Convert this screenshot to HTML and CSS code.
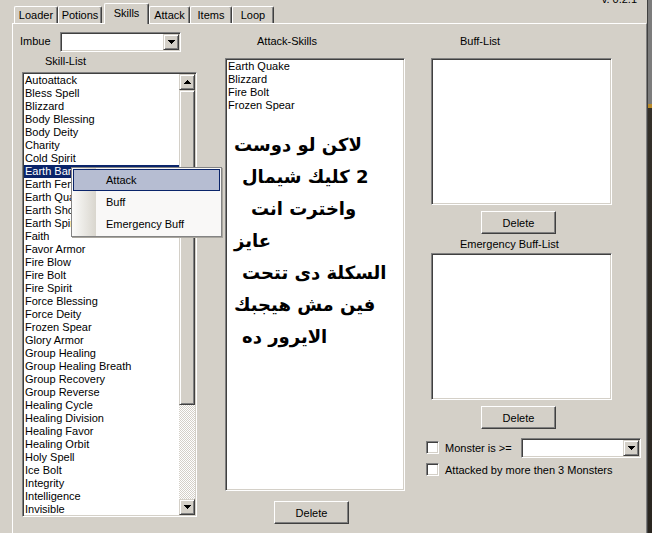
FILE: index.html
```html
<!DOCTYPE html>
<html>
<head>
<meta charset="utf-8">
<title>Skills</title>
<link rel="stylesheet" href="styles.css">
</head>
<body>
<div class="window">
  <div class="main">
    <div class="version"><span>v. 0.2.1</span></div>
    <div class="tabs">
      <div class="tab t-loader">Loader</div>
      <div class="tab t-potions">Potions</div>
      <div class="tab active t-skills">Skills</div>
      <div class="tab t-attack">Attack</div>
      <div class="tab t-items">Items</div>
      <div class="tab t-loop">Loop</div>
    </div>
    <div class="panel">
      <div class="col col-left">
        <div class="imbue-row">
          <span class="imbue-lbl">Imbue</span>
          <div class="combo imbue-combo">
            <div class="combo-field"></div>
            <div class="raised combo-btn"><svg width="7" height="4" viewBox="0 0 7 4"><path d="M0 0h7v1H6v1H5v1H4v1H3V3H2V2H1V1H0z"/></svg></div>
          </div>
        </div>
        <div class="caption skill-cap">Skill-List</div>
        <div class="sunken skill-list">
          <div class="items">
            <div class="item">Autoattack</div>
            <div class="item">Bless Spell</div>
            <div class="item">Blizzard</div>
            <div class="item">Body Blessing</div>
            <div class="item">Body Deity</div>
            <div class="item">Charity</div>
            <div class="item">Cold Spirit</div>
            <div class="item sel">Earth Barrier</div>
            <div class="item">Earth Fence</div>
            <div class="item">Earth Quake</div>
            <div class="item">Earth Shock</div>
            <div class="item">Earth Spirit</div>
            <div class="item">Faith</div>
            <div class="item">Favor Armor</div>
            <div class="item">Fire Blow</div>
            <div class="item">Fire Bolt</div>
            <div class="item">Fire Spirit</div>
            <div class="item">Force Blessing</div>
            <div class="item">Force Deity</div>
            <div class="item">Frozen Spear</div>
            <div class="item">Glory Armor</div>
            <div class="item">Group Healing</div>
            <div class="item">Group Healing Breath</div>
            <div class="item">Group Recovery</div>
            <div class="item">Group Reverse</div>
            <div class="item">Healing Cycle</div>
            <div class="item">Healing Division</div>
            <div class="item">Healing Favor</div>
            <div class="item">Healing Orbit</div>
            <div class="item">Holy Spell</div>
            <div class="item">Ice Bolt</div>
            <div class="item">Integrity</div>
            <div class="item">Intelligence</div>
            <div class="item">Invisible</div>
          </div>
          <div class="vscroll">
            <div class="raised sbtn"><svg width="7" height="4" viewBox="0 0 7 4"><path d="M3 0h1v1h1v1h1v1h1v1H0V3h1V2h1V1h1z"/></svg></div>
            <div class="raised thumb"></div>
            <div class="track"></div>
            <div class="raised sbtn"><svg width="7" height="4" viewBox="0 0 7 4"><path d="M0 0h7v1H6v1H5v1H4v1H3V3H2V2H1V1H0z"/></svg></div>
          </div>
          <div class="ctx">
            <div class="ctx-item hot">Attack</div>
            <div class="ctx-item">Buff</div>
            <div class="ctx-item">Emergency Buff</div>
          </div>
        </div>
      </div>

      <div class="col col-mid">
        <div class="caption mid-cap">Attack-Skills</div>
        <div class="sunken attack-list">
          <div class="item">Earth Quake</div>
          <div class="item">Blizzard</div>
          <div class="item">Fire Bolt</div>
          <div class="item">Frozen Spear</div>
          <div class="note">
            <div class="ar ar1" dir="rtl">لاكن لو دوست</div>
            <div class="ar ar2" dir="rtl">2 كليك شيمال</div>
            <div class="ar ar3" dir="rtl">واخترت انت</div>
            <div class="ar ar4" dir="rtl">عايز</div>
            <div class="ar ar5" dir="rtl">السكلة دى تتحت</div>
            <div class="ar ar6" dir="rtl">فين مش هيجبك</div>
            <div class="ar ar7" dir="rtl">الايرور ده</div>
          </div>
        </div>
        <div class="raised button mid-del">Delete</div>
      </div>

      <div class="col col-right">
        <div class="caption right-cap">Buff-List</div>
        <div class="sunken buff-list"></div>
        <div class="raised button right-del">Delete</div>
        <div class="caption emerg-cap">Emergency Buff-List</div>
        <div class="sunken emerg-list"></div>
        <div class="raised button right-del">Delete</div>
        <div class="check-row row1">
          <div class="sunken checkbox"></div>
          <span class="check-lbl">Monster is &gt;=</span>
          <div class="combo monster-combo">
            <div class="combo-field"></div>
            <div class="raised combo-btn"><svg width="7" height="4" viewBox="0 0 7 4"><path d="M0 0h7v1H6v1H5v1H4v1H3V3H2V2H1V1H0z"/></svg></div>
          </div>
        </div>
        <div class="check-row row2">
          <div class="sunken checkbox"></div>
          <span class="check-lbl">Attacked by more then 3 Monsters</span>
        </div>
      </div>
    </div>
  </div>
  <div class="edge"></div>
</div>
</body>
</html>
```

FILE: styles.css
```css
* { box-sizing: border-box; }

body {
  margin: 0;
  width: 652px;
  height: 533px;
  overflow: hidden;
  background: #d4d0c8;
  font-family: "Liberation Sans", Arial, sans-serif;
  font-size: 11px;
  color: #000;
}

.window {
  display: flex;
  height: 533px;
}

.main {
  width: 647px;
  flex: none;
  display: flex;
  flex-direction: column;
}

.edge {
  flex: 1;
  background:
    linear-gradient(#404040, #404040) 0 0 / 1px 100% no-repeat,
    linear-gradient(to bottom, #7c7c7c 0, #7c7c7c 104px, #b98a2a 104px, #b98a2a 108px, #34302a 108px, #2a2620 100%);
}

/* version text (clipped at top) */
.version {
  height: 3px;
  overflow: hidden;
  display: flex;
  justify-content: flex-end;
  align-items: flex-end;
  padding-right: 10px;
}
.version span {
  line-height: 12px;
  margin-bottom: -2px;
}

/* tabs */
.tabs {
  height: 21px;
  margin-bottom: -1px;
  position: relative;
  z-index: 1;
  display: flex;
  align-items: flex-start;
  padding-left: 14px;
}
.tab {
  margin-top: 3px;
  height: 17px;
  border-left: 1px solid #fff;
  border-top: 1px solid #fff;
  border-right: 1px solid #404040;
  box-shadow: inset -1px 0 0 #808080;
  border-radius: 2px 2px 0 0;
  background: #d4d0c8;
  text-align: center;
  line-height: 16px;
}
.tab.active {
  margin-top: 0;
  height: 21px;
  line-height: 18px;
}
.t-loader { width: 44px; }
.t-potions { width: 44px; margin-right: 2px; }
.t-skills { width: 45px; }
.t-attack { width: 41px; }
.t-items { width: 42px; }
.t-loop { width: 42px; }

/* panel */
.panel {
  flex: 1;
  margin-left: 12px;
  border-left: 1px solid #fff;
  border-top: 1px solid #fff;
  border-right: 1px solid #808080;
  display: flex;
  align-items: flex-start;
}

.col {
  display: flex;
  flex-direction: column;
  flex: none;
}
.col-left { margin-left: 7px; width: 178px; }
.col-mid { margin-left: 27px; width: 180px; }
.col-right { margin-left: 21px; width: 215px; }

.caption {
  line-height: 13px;
  height: 13px;
  white-space: nowrap;
}

/* 3D styles */
.sunken {
  background: #fff;
  border: 1px solid;
  border-color: #808080 #fff #fff #808080;
  box-shadow: inset 1px 1px 0 #404040, inset -1px -1px 0 #d4d0c8;
  padding: 1px;
}
.raised {
  background: #d4d0c8;
  border: 1px solid;
  border-color: #d4d0c8 #404040 #404040 #d4d0c8;
  box-shadow: inset 1px 1px 0 #fff, inset -1px -1px 0 #808080;
}

/* imbue */
.imbue-row {
  margin-top: 8px;
  height: 20px;
  display: flex;
  align-items: center;
}
.imbue-lbl {
  width: 40px;
  margin-top: -2px;
}
.combo {
  height: 20px;
  display: flex;
  background: #fff;
  border: 1px solid;
  border-color: #808080 #fff #fff #808080;
  box-shadow: inset 1px 1px 0 #404040, inset -1px -1px 0 #d4d0c8;
  padding: 1px;
}
.combo-field { flex: 1; }
.combo-btn {
  width: 16px;
  height: 16px;
  display: flex;
  align-items: center;
  justify-content: center;
}
.combo-btn svg, .sbtn svg { display: block; }
.imbue-combo { width: 121px; }

.skill-cap {
  margin-top: 3px;
  padding-left: 25px;
}

/* skill list */
.skill-list {
  margin-top: 4px;
  margin-left: 2px;
  width: 175px;
  height: 445px;
  display: flex;
  position: relative;
}
.items {
  flex: 1;
  overflow: hidden;
}
.item {
  height: 13px;
  line-height: 13px;
  padding-left: 1px;
  white-space: nowrap;
}
.item.sel {
  background: #0a246a;
  color: #fff;
}
.vscroll {
  width: 16px;
  display: flex;
  flex-direction: column;
}
.sbtn {
  height: 16px;
  display: flex;
  align-items: center;
  justify-content: center;
}
.thumb { height: 315px; }
.track {
  flex: 1;
  background: repeating-conic-gradient(#fff 0 25%, #d4d0c8 0 50%) 0 0 / 2px 2px;
}

/* context menu */
.ctx {
  position: absolute;
  left: 48px;
  top: 94px;
  width: 151px;
  border: 1px solid #848484;
  padding: 1px;
  background:
    linear-gradient(to right, #fbfbfa, #d9d6ce) 0 0 / 24px 100% no-repeat,
    #f9f8f7;
  box-shadow: 1px 1px 0 #a9a69e;
}
.ctx-item {
  height: 22px;
  line-height: 20px;
  border: 1px solid transparent;
  padding-left: 32px;
  white-space: nowrap;
}
.ctx-item.hot {
  background: #b6bdd2;
  border-color: #0a246a;
}

/* attack skills */
.mid-cap {
  margin-top: 11px;
  padding-left: 32px;
}
.attack-list {
  margin-top: 10px;
  width: 180px;
  height: 433px;
  overflow: hidden;
}
.note {
  margin-top: 17px;
}
.ar {
  font-family: "DejaVu Sans", sans-serif;
  font-weight: bold;
  font-size: 18px;
  line-height: 32px;
  height: 32px;
  text-align: left;
  white-space: nowrap;
}
.ar1 { padding-left: 7px; }
.ar2 { padding-left: 15px; }
.ar3 { padding-left: 24px; }
.ar4 { padding-left: 7px; }
.ar5 { padding-left: 15px; }
.ar6 { padding-left: 7px; }
.ar7 { padding-left: 15px; }

.button {
  width: 75px;
  height: 23px;
  display: flex;
  align-items: center;
  justify-content: center;
  border-color: #fff #404040 #404040 #fff;
  box-shadow: inset -1px -1px 0 #808080;
}
.mid-del {
  margin-top: 10px;
  margin-left: 49px;
}

/* right column */
.right-cap {
  margin-top: 11px;
  padding-left: 34px;
}
.buff-list {
  margin-top: 10px;
  margin-left: 5px;
  width: 181px;
  height: 147px;
}
.right-del {
  margin-top: 6px;
  margin-left: 55px;
}
.emerg-cap {
  margin-top: 4px;
  padding-left: 34px;
}
.emerg-list {
  margin-top: 2px;
  margin-left: 5px;
  width: 181px;
  height: 147px;
}
.check-row {
  display: flex;
  align-items: center;
}
.row1 {
  margin-top: 8px;
  height: 21px;
}
.row2 {
  margin-top: 5px;
  height: 13px;
}
.checkbox {
  width: 13px;
  height: 13px;
  flex: none;
}
.check-lbl {
  margin-left: 6px;
  white-space: nowrap;
}
.monster-combo {
  margin-left: auto;
  width: 120px;
}
```
